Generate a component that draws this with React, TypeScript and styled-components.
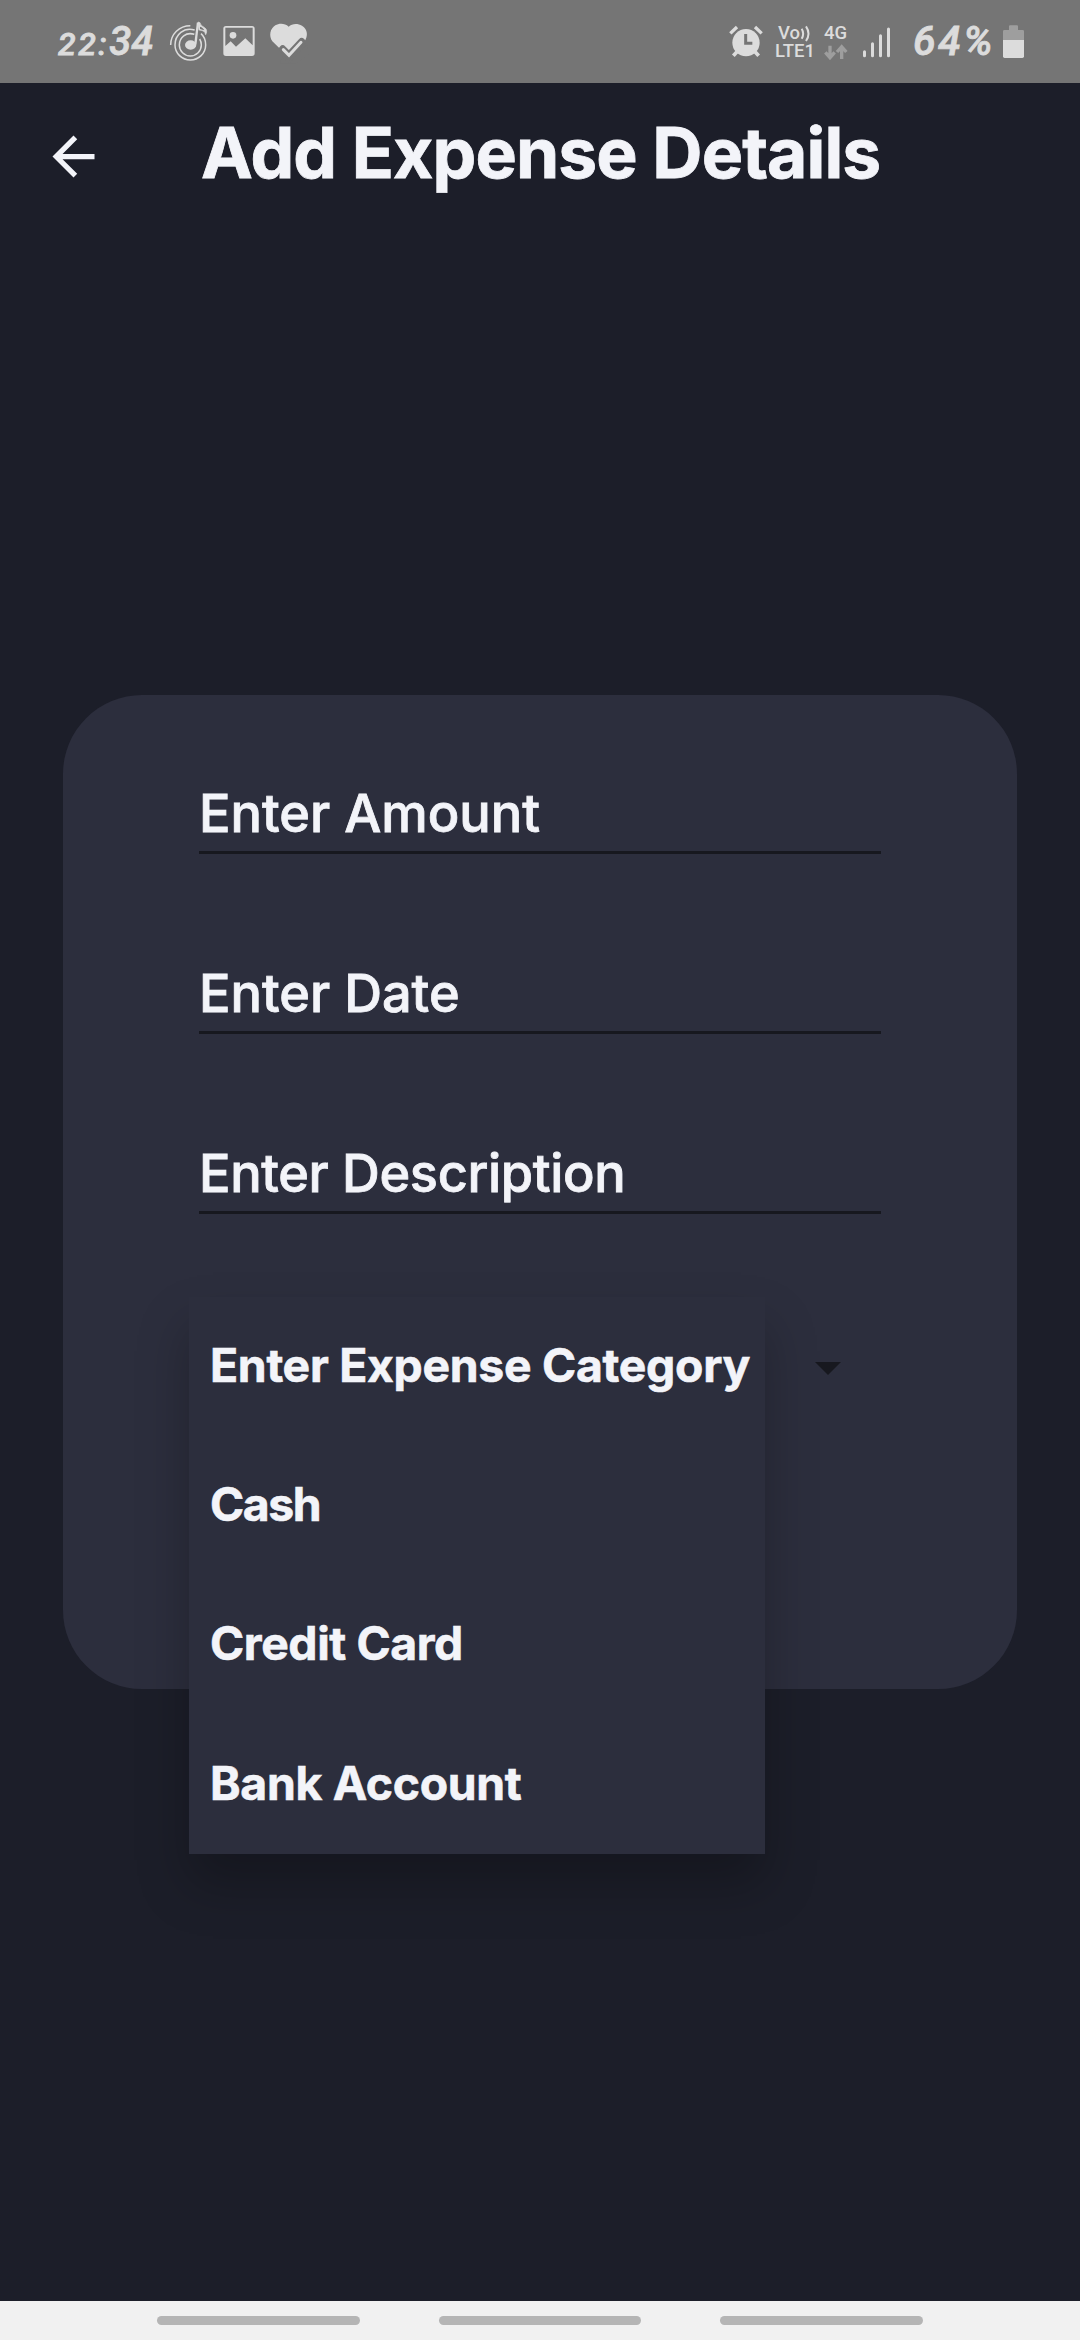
import React from "react";
import styled, { createGlobalStyle } from "styled-components";

const color = {
  page: "#1c1e29",
  surface: "#2c2e3d",
  text: "#f3f4f9",
  ink: "#17181f",
  status: "#757575",
  statusIcon: "#dcdcdc",
  statusDim: "#9e9e9e",
};

const GlobalStyle = createGlobalStyle`
  *, *::before, *::after { box-sizing: border-box; }
  body { margin: 0; background: ${color.page}; }
`;

const Screen = styled.div`
  display: flex;
  flex-direction: column;
  width: 1080px;
  height: 2340px;
  overflow: hidden;
  background: ${color.page};
  color: ${color.text};
  font-family: Inter, Roboto, "Liberation Sans", sans-serif;
`;

/* ---------- Status bar ---------- */

const StatusBar = styled.div`
  display: flex;
  justify-content: space-between;
  flex: none;
  height: 83px;
  padding: 0 54px 0 57px;
  background: ${color.status};
  color: ${color.statusIcon};
  font-family: Roboto, "Liberation Sans", sans-serif;
`;

const StatusGroup = styled.div`
  display: flex;
`;

const StatusIcon = styled.svg<{ $w: number; $gap: number }>`
  display: block;
  flex: none;
  width: ${(p) => p.$w}px;
  height: 83px;
  margin-left: ${(p) => p.$gap}px;
`;

const Script = styled.div<{ $w: number; $gap?: number }>`
  display: flex;
  align-items: baseline;
  flex: none;
  width: ${(p) => p.$w}px;
  height: 83px;
  margin-left: ${(p) => p.$gap ?? 0}px;
  padding-left: 1px;
  font-style: italic;
  font-weight: 500;
  line-height: 83px;
  white-space: nowrap;
  -webkit-text-stroke: 0.8px currentColor;
`;

const Digits = styled.span<{ $size: number; $spacing?: number }>`
  font-size: ${(p) => p.$size}px;
  letter-spacing: ${(p) => p.$spacing ?? 0}px;
`;

const Network = styled.div<{ $w: number; $gap: number }>`
  display: flex;
  flex-direction: column;
  flex: none;
  width: ${(p) => p.$w}px;
  margin-left: ${(p) => p.$gap}px;
  padding: 24px 0 0 1px;
  font-size: 18.5px;
  font-weight: 500;
  line-height: 18px;
  white-space: nowrap;
`;

const VoLine = styled.span`
  display: flex;
  padding-left: 3px;
`;

const Waves = styled.svg`
  display: block;
  width: 11px;
  height: 18px;
`;

const DataArrows = styled.svg`
  display: block;
  width: 24px;
  height: 16px;
  margin-top: 2px;
`;

/* ---------- Header ---------- */

const Header = styled.header`
  display: flex;
  align-items: center;
  flex: none;
  gap: 96px;
  height: 142px;
  padding: 0 0 2px 42px;
`;

const BackButton = styled.button`
  flex: none;
  width: 63px;
  height: 63px;
  margin: 7px 0 0;
  padding: 0;
  border: 0;
  background: none;
  color: ${color.text};
`;

const BackArrow = styled.svg`
  display: block;
  width: 63px;
  height: 63px;
  fill: currentColor;
`;

const Title = styled.h1`
  margin: 0;
  font-size: 69.5px;
  font-weight: 700;
  line-height: 84px;
  letter-spacing: -0.9px;
  white-space: nowrap;
  -webkit-text-stroke: 0.8px currentColor;
`;

/* ---------- Form ---------- */

const Main = styled.main`
  flex: 1;
  padding: 470px 63px 0;
`;

const Card = styled.form`
  display: flex;
  flex-direction: column;
  height: 994px;
  padding: 85px 136px 0;
  border-radius: 79px;
  background: ${color.surface};
`;

const Fields = styled.div`
  display: flex;
  flex-direction: column;
  gap: 106px;
`;

const Field = styled.div<{ $spacing: number }>`
  height: 74px;
  border-bottom: 3px solid ${color.ink};
  font-size: 52.3px;
  font-weight: 500;
  line-height: 66px;
  letter-spacing: ${(p) => p.$spacing}px;
  white-space: nowrap;
  -webkit-text-stroke: 0.8px currentColor;
`;

const Spinner = styled.div`
  position: relative;
  display: flex;
  align-items: center;
  justify-content: flex-end;
  height: 139px;
  margin-top: 83px;
  padding: 4px 40px 0 0;
`;

const Caret = styled.div`
  width: 26px;
  height: 13px;
  background: ${color.ink};
  clip-path: polygon(0 0, 100% 0, 50% 100%);
`;

const Menu = styled.div`
  position: absolute;
  top: 0;
  left: -10px;
  width: 576px;
  background: ${color.surface};
  box-shadow: 0 30px 48px rgba(0, 0, 0, 0.25);
`;

const MenuItem = styled.div<{ $spacing: number }>`
  display: flex;
  align-items: center;
  height: 139.2px;
  padding: 0 0 3px 21px;
  font-size: 46.3px;
  font-weight: 700;
  letter-spacing: ${(p) => p.$spacing}px;
  white-space: nowrap;
  -webkit-text-stroke: 0.6px currentColor;
`;

/* ---------- Navigation bar ---------- */

const NavBar = styled.nav`
  display: flex;
  justify-content: center;
  flex: none;
  gap: 79px;
  height: 39px;
  padding-top: 15px;
  background: #f1f1f1;
`;

const NavHandle = styled.span`
  width: 202.5px;
  height: 9px;
  border-radius: 5px;
  background: #b5b5b5;
`;

const fields = [
  { label: "Enter Amount", spacing: 0 },
  { label: "Enter Date", spacing: 0 },
  { label: "Enter Description", spacing: -0.35 },
];

const options = [
  { label: "Enter Expense Category", spacing: -0.28 },
  { label: "Cash", spacing: -1.4 },
  { label: "Credit Card", spacing: -0.4 },
  { label: "Bank Account", spacing: -0.3 },
];

const MusicIcon = () => (
  <StatusIcon $w={42} $gap={11} viewBox="504 0 126 249" fill="none" stroke="currentColor" strokeWidth="4.5">
    <path d="M512 135C512 103 538 77 571 77" />
    <path d="M584 90C552 80 525 104 525 135C525 160 546 180 571 180C596 180 617 160 617 135C617 121 611 108 603 101" />
    <path d="M583 103C558 95 538 112 538 135C538 153 553 168 571 168C589 168 604 153 604 135C604 128 602 122 599 117" />
    <ellipse cx="572" cy="135" rx="17" ry="14" fill="currentColor" stroke="none" />
    <path d="M586 133L594 68" strokeWidth="7" />
    <path d="M594 66L600 68C602 79 612 79 618 87C621 92 620 98 617 104C615 94 609 91 597 90Z" fill="currentColor" stroke="currentColor" strokeWidth="2" />
    <path d="M600 80C606 82 611 86 613 91L600 87Z" fill={color.status} stroke="none" />
  </StatusIcon>
);

const PictureIcon = () => (
  <StatusIcon $w={38} $gap={10} viewBox="660 0 114 249" fill="currentColor">
    <path
      fillRule="evenodd"
      d="M678 78H756Q764 78 764 86V160Q764 168 756 168H678Q670 168 670 160V86Q670 78 678 78ZM676 83V138L692 124L708 140L736 115L758 136V83Z"
    />
    <circle cx="699" cy="106" r="10" />
  </StatusIcon>
);

const HeartIcon = () => (
  <StatusIcon $w={41} $gap={10} viewBox="804 0 123 249">
    <path
      fill="currentColor"
      d="M866 80C855 69 837 69 826 76C810 86 806 108 817 124L866 172L914 124C924 108 924 88 906 77C893 69 876 70 866 80Z"
    />
    <path d="M848 147L867 166L905 125" fill="none" stroke={color.status} strokeWidth="22" strokeLinecap="round" />
    <path d="M848 170L867 190L920 134L930 160L890 190H840Z" fill={color.status} />
    <path d="M850 149L867 166L903 127" fill="none" stroke="currentColor" strokeWidth="9" strokeLinecap="round" />
  </StatusIcon>
);

const AlarmIcon = () => (
  <StatusIcon $w={36} $gap={0} viewBox="84 0 108 249" fill="none" stroke="currentColor">
    <circle cx="138" cy="128" r="41" fill="currentColor" stroke="none" />
    <path d="M91 100L111 81M185 100L165 81" strokeWidth="10" />
    <path d="M111 155L100 167M165 155L176 167" strokeWidth="11" />
    <path d="M137 102V130H157" stroke={color.status} strokeWidth="9" />
  </StatusIcon>
);

const SignalIcon = () => (
  <StatusIcon $w={32} $gap={10} viewBox="480 0 96 249" stroke="currentColor" strokeWidth="9" strokeLinecap="round">
    <path d="M493.500 155V167M517.500 131V167M541.500 107V167M565.500 87V167" />
  </StatusIcon>
);

const BatteryIcon = () => (
  <StatusIcon $w={25} $gap={8} viewBox="903 0 75 249">
    <path fill={color.statusDim} d="M927 79Q927 76 930 76H951Q954 76 954 79V90H968Q972 90 972 94V120H909V94Q909 90 913 90H927Z" />
    <path fill="currentColor" d="M909 120H972V169Q972 174 967 174H914Q909 174 909 169Z" />
  </StatusIcon>
);

export default function App() {
  return (
    <>
      <GlobalStyle />
      <Screen>
        <StatusBar>
          <StatusGroup>
            <Script $w={100}>
              <Digits $size={32} $spacing={2.5}>22:</Digits>
              <Digits $size={40} $spacing={0}>34</Digits>
            </Script>
            <MusicIcon />
            <PictureIcon />
            <HeartIcon />
          </StatusGroup>
          <StatusGroup>
            <AlarmIcon />
            <Network $w={41} $gap={10}>
              <VoLine>
                Vo
                <Waves viewBox="0 0 33 54" fill="none" stroke="currentColor" strokeWidth="6">
                  <path d="M5 14Q14 29 5 44M18 7Q33 29 18 51" />
                </Waves>
              </VoLine>
              <span>LTE1</span>
            </Network>
            <Network $w={27} $gap={8}>
              <span>4G</span>
              <DataArrows viewBox="0 0 72 48" fill="none" stroke={color.statusDim} strokeWidth="10">
                <path d="M18 5V40M4 25L18 41L32 25M53 45V10M39 24L53 8L67 24" />
              </DataArrows>
            </Network>
            <SignalIcon />
            <Script $w={81} $gap={20}>
              <Digits $size={41} $spacing={2.5}>64%</Digits>
            </Script>
            <BatteryIcon />
          </StatusGroup>
        </StatusBar>

        <Header>
          <BackButton type="button" aria-label="Back">
            <BackArrow viewBox="0 0 24 24">
              <path d="M20 11H7.830l5.590-5.590L12 4l-8 8 8 8 1.410-1.410L7.830 13H20v-2z" />
            </BackArrow>
          </BackButton>
          <Title>Add Expense Details</Title>
        </Header>

        <Main>
          <Card>
            <Fields>
              {fields.map((f) => (
                <Field key={f.label} $spacing={f.spacing}>
                  {f.label}
                </Field>
              ))}
            </Fields>
            <Spinner>
              <Caret />
              <Menu role="listbox">
                {options.map((o) => (
                  <MenuItem key={o.label} role="option" $spacing={o.spacing}>
                    {o.label}
                  </MenuItem>
                ))}
              </Menu>
            </Spinner>
          </Card>
        </Main>

        <NavBar>
          <NavHandle />
          <NavHandle />
          <NavHandle />
        </NavBar>
      </Screen>
    </>
  );
}
